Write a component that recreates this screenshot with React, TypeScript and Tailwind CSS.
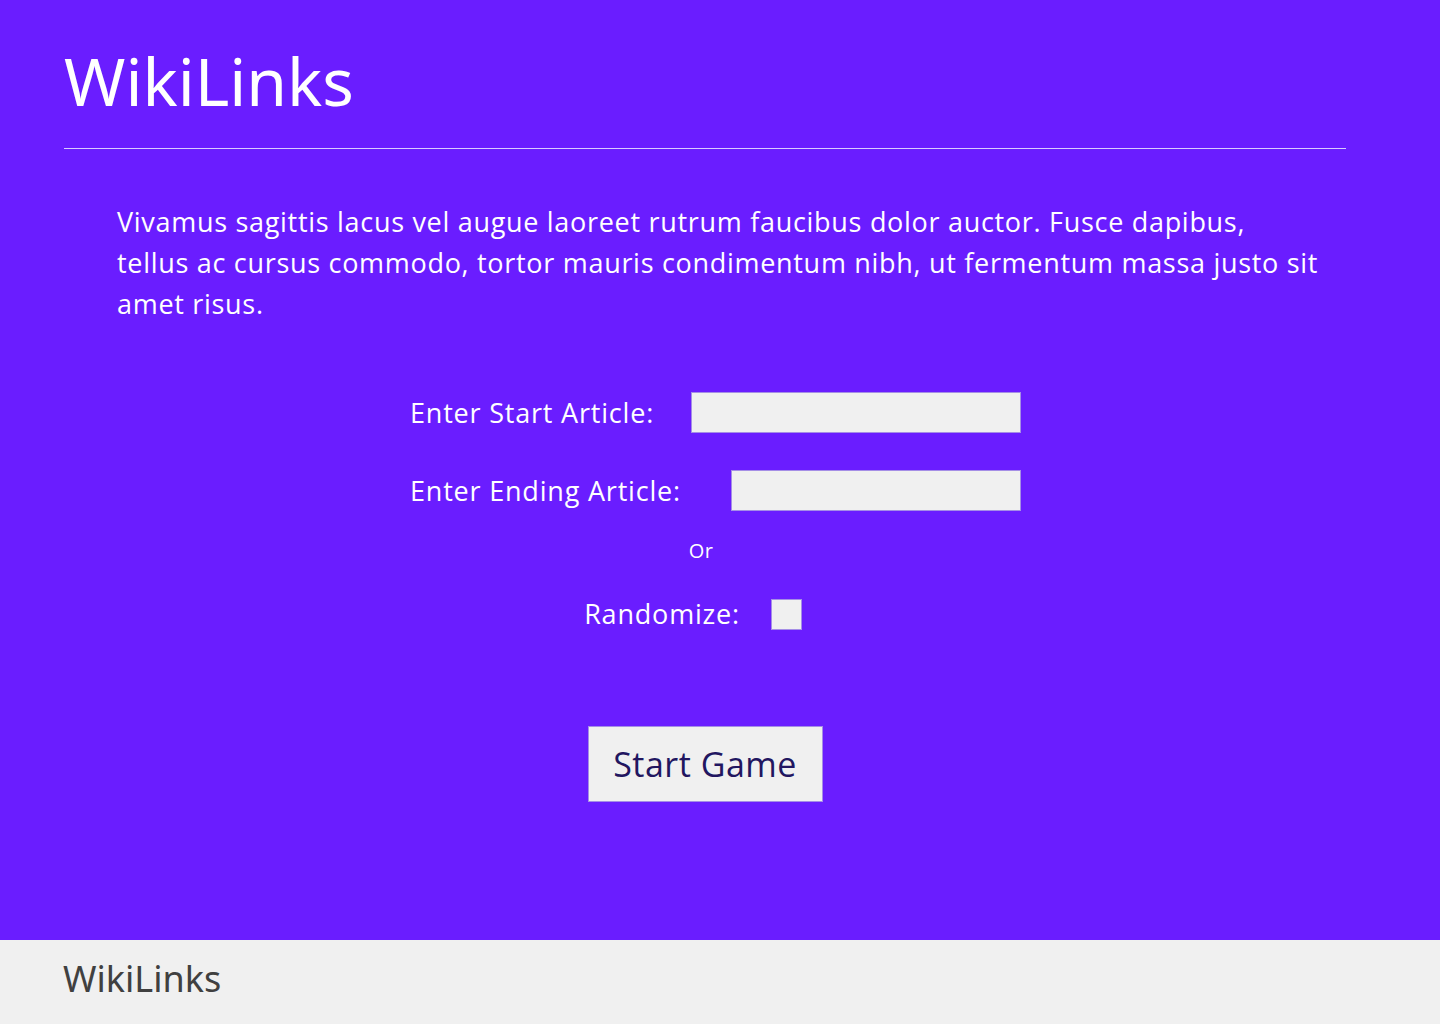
export default function App() {
  return (
    <div className="flex min-h-[1024px] flex-col bg-[#6a1dff] font-['Open_Sans','Noto_Sans',sans-serif]">
      <main className="flex-1">
        <header className="mx-[64px] mr-[94px] border-b border-[#d9ccff] pt-[38px] pb-[26px]">
          <h1 className="font-['Noto_Sans',sans-serif] text-[66px] leading-[84px] text-white">
            WikiLinks
          </h1>
        </header>

        <p className="ml-[117px] mr-[98px] mt-[52px] text-[27px] leading-[41px] tracking-[0.7px] text-white">
          Vivamus sagittis lacus vel augue laoreet rutrum faucibus dolor auctor. Fusce dapibus,
          <br />
          tellus ac cursus commodo, tortor mauris condimentum nibh, ut fermentum massa justo sit
          amet risus.
        </p>

        <form className="ml-[410px] mt-[68px] flex w-[611px] flex-col text-white" onSubmit={(e) => e.preventDefault()}>
          <div className="flex items-center justify-between">
            <label className="text-[27px] leading-[40px] tracking-[0.8px]">Enter Start Article:</label>
            <input className="h-[41px] w-[330px] border border-[#a58ee6] bg-[#f0f0f0]" />
          </div>
          <div className="mt-[37px] flex items-center justify-between">
            <label className="text-[27px] leading-[40px] tracking-[0.8px]">Enter Ending Article:</label>
            <input className="h-[41px] w-[290px] border border-[#a58ee6] bg-[#f0f0f0]" />
          </div>
          <p className="mt-[24px] pr-[29px] text-center text-[20px] leading-[32px] tracking-[0.5px]">Or</p>
          <div className="mt-[27px] flex items-center justify-center gap-[31px] pr-[45px]">
            <label className="text-[27px] leading-[40px] tracking-[0.8px]">Randomize:</label>
            <span className="h-[31px] w-[31px] border border-[#a58ee6] bg-[#f0f0f0]" />
          </div>
          <div className="mt-[92px] flex justify-center pr-[21px]">
            <button className="h-[76px] w-[235px] border border-[#a58ee6] bg-[#f0f0f0] text-[34px] tracking-[0.5px] text-[#221660]">
              Start Game
            </button>
          </div>
        </form>
      </main>

      <footer className="h-[84px] bg-[#f0f0f0] px-[63px] pt-[14px]">
        <p className="font-['Noto_Sans',sans-serif] text-[36px] leading-[50px] text-[#404040]">WikiLinks</p>
      </footer>
    </div>
  );
}
